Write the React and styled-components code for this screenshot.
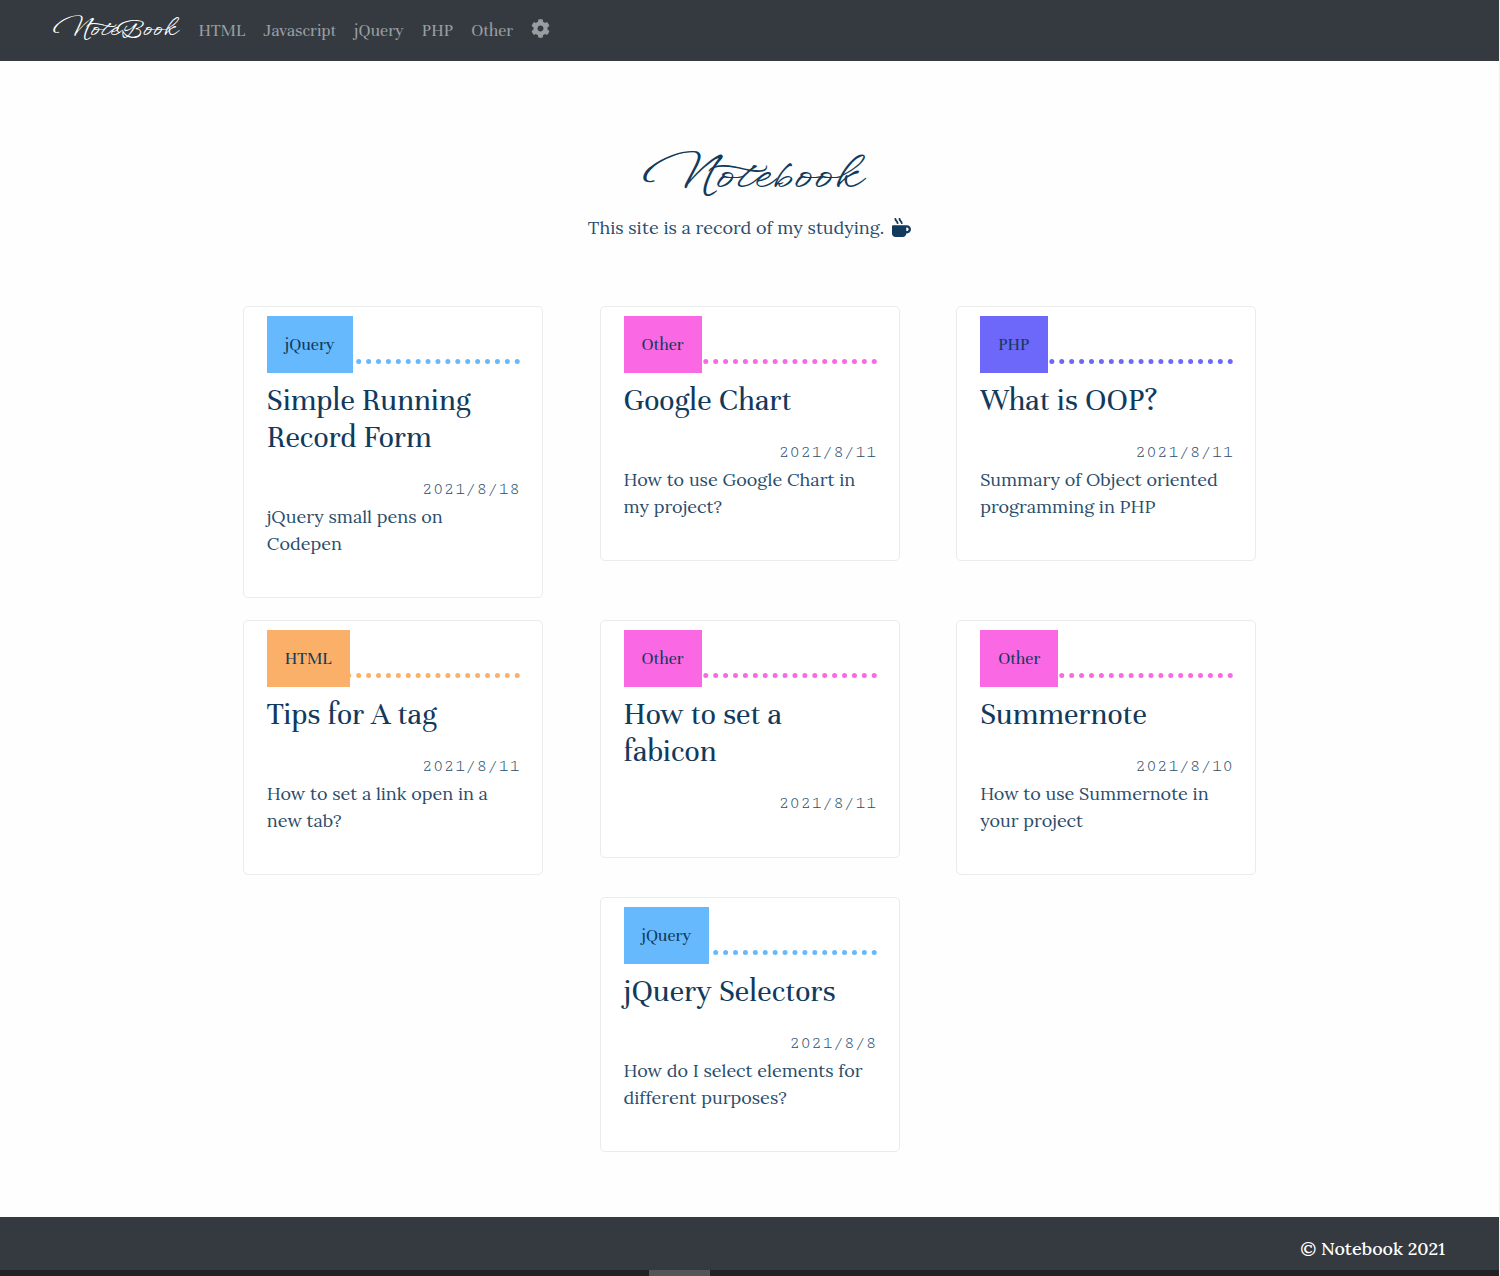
import React from "react";
import styled, { createGlobalStyle } from "styled-components";
import { FaCog, FaMugHot } from "react-icons/fa";

const GlobalStyle = createGlobalStyle`
  * { box-sizing: border-box; }
  body {
    margin: 0;
    background: #fefefe;
    color: #123a5c;
    font-family: Lora, "Liberation Serif", serif;
  }
  a { color: inherit; text-decoration: none; }
`;

const displayFont = `Unna, "Liberation Serif", serif`;
const scriptFont = `WindSong, "Liberation Serif", cursive`;

const Page = styled.div`
  display: flex;
  flex-direction: column;
  min-height: 100vh;
  border-right: 1px solid #f1f1f1;
`;

const Navbar = styled.header`
  display: flex;
  align-items: center;
  gap: 24px;
  height: 61px;
  padding: 0 53px;
  background: #343a40;
`;

const Brand = styled.a`
  && { color: #fff; }
  font-family: ${scriptFont};
  font-size: 23px;
  font-weight: 500;
  line-height: 48px;
`;

const Nav = styled.nav`
  display: flex;
  align-items: center;
  gap: 18px;
`;

const NavLink = styled.a`
  && { color: #9a9da0; }
  font-family: ${displayFont};
  font-size: 18px;
  line-height: 27px;
`;

const SettingsLink = styled(NavLink)`
  display: flex;
  padding-bottom: 4px;
`;

const Main = styled.main`
  flex: 1;
  padding: 83px 24px 65px;
`;

const Hero = styled.section`
  text-align: center;
  margin-bottom: 65px;
`;

const SiteTitle = styled.h1`
  margin: 0 0 2px;
  font-family: ${scriptFont};
  font-size: 45px;
  font-weight: 500;
  line-height: 68px;
`;

const Tagline = styled.p`
  display: flex;
  justify-content: center;
  align-items: center;
  gap: 8px;
  margin: 0;
  color: #2b4d6c;
  font-size: 18px;
  line-height: 27px;
  svg { color: #123a5c; }
`;

const CardList = styled.ul`
  display: flex;
  flex-wrap: wrap;
  justify-content: center;
  align-items: flex-start;
  row-gap: 22px;
  max-width: 1070px;
  margin: 0 auto;
  padding: 0;
  list-style: none;
`;

const CardItem = styled.li`
  display: flex;
  justify-content: center;
  flex: 0 0 calc(100% / 3);
  @media (max-width: 980px) { flex-basis: 50%; }
  @media (max-width: 660px) { flex-basis: 100%; }
`;

const Card = styled.article`
  width: 100%;
  max-width: 300px;
  padding: 9px 22px 40px 23px;
  border: 1px solid #ebebeb;
  border-radius: 5px;
  background: #fff;
`;

const CardHead = styled.div`
  display: flex;
  margin-bottom: 18px;
  border-bottom: 5px dotted ${(p) => p.$tone};
`;

const Badge = styled.a`
  margin-bottom: -14px;
  padding: 15px 18px;
  background: ${(p) => p.$tone};
  font-family: ${displayFont};
  font-size: 18px;
  line-height: 27px;
`;

const CardTitle = styled.h2`
  margin: 0 0 20px;
  font-family: ${displayFont};
  font-size: 32px;
  font-weight: 400;
  line-height: 37px;
`;

const CardDate = styled.time`
  display: block;
  color: #2b4d6c;
  font-family: "Cutive Mono", "Liberation Mono", monospace;
  font-size: 18px;
  line-height: 27px;
  text-align: right;
`;

const CardText = styled.p`
  margin: 0;
  color: #2b4d6c;
  font-size: 18px;
  line-height: 27px;
`;

const Footer = styled.footer`
  padding: 18px 54px 8px;
  background: #343a40;
  color: #fff;
  font-size: 18px;
  font-weight: 500;
  line-height: 27px;
  text-align: right;
`;

const ScrollTrack = styled.div`
  height: 6px;
  background: #222224;
`;

const ScrollThumb = styled.div`
  width: 61px;
  height: 100%;
  margin-left: 43.3%;
  background: #555557;
`;

const tones = {
  jQuery: "#66b9fc",
  Other: "#fb68e3",
  PHP: "#6d68fa",
  HTML: "#fab068",
};

const notes = [
  { tag: "jQuery", title: "Simple Running Record Form", date: "2021/8/18", text: "jQuery small pens on Codepen" },
  { tag: "Other", title: "Google Chart", date: "2021/8/11", text: "How to use Google Chart in my project?" },
  { tag: "PHP", title: "What is OOP?", date: "2021/8/11", text: "Summary of Object oriented programming in PHP" },
  { tag: "HTML", title: "Tips for A tag", date: "2021/8/11", text: "How to set a link open in a new tab?" },
  { tag: "Other", title: "How to set a fabicon", date: "2021/8/11" },
  { tag: "Other", title: "Summernote", date: "2021/8/10", text: "How to use Summernote in your project" },
  { tag: "jQuery", title: "jQuery Selectors", date: "2021/8/8", text: "How do I select elements for different purposes?" },
];

function NoteCard({ note }) {
  const tone = tones[note.tag];
  return (
    <CardItem>
      <Card>
        <CardHead $tone={tone}>
          <Badge href="#" $tone={tone}>{note.tag}</Badge>
        </CardHead>
        <CardTitle><a href="#">{note.title}</a></CardTitle>
        <CardDate>{note.date}</CardDate>
        {note.text && <CardText>{note.text}</CardText>}
      </Card>
    </CardItem>
  );
}

export default function App() {
  return (
    <>
      <GlobalStyle />
      <Page>
        <Navbar>
          <Brand href="#">NoteBook</Brand>
          <Nav>
            {["HTML", "Javascript", "jQuery", "PHP", "Other"].map((name) => (
              <NavLink href="#" key={name}>{name}</NavLink>
            ))}
            <SettingsLink href="#" aria-label="Settings"><FaCog size={19} /></SettingsLink>
          </Nav>
        </Navbar>
        <Main>
          <Hero>
            <SiteTitle>Notebook</SiteTitle>
            <Tagline>This site is a record of my studying. <FaMugHot size={19} /></Tagline>
          </Hero>
          <CardList>
            {notes.map((note) => <NoteCard key={note.title} note={note} />)}
          </CardList>
        </Main>
        <Footer>© Notebook 2021</Footer>
        <ScrollTrack><ScrollThumb /></ScrollTrack>
      </Page>
    </>
  );
}
